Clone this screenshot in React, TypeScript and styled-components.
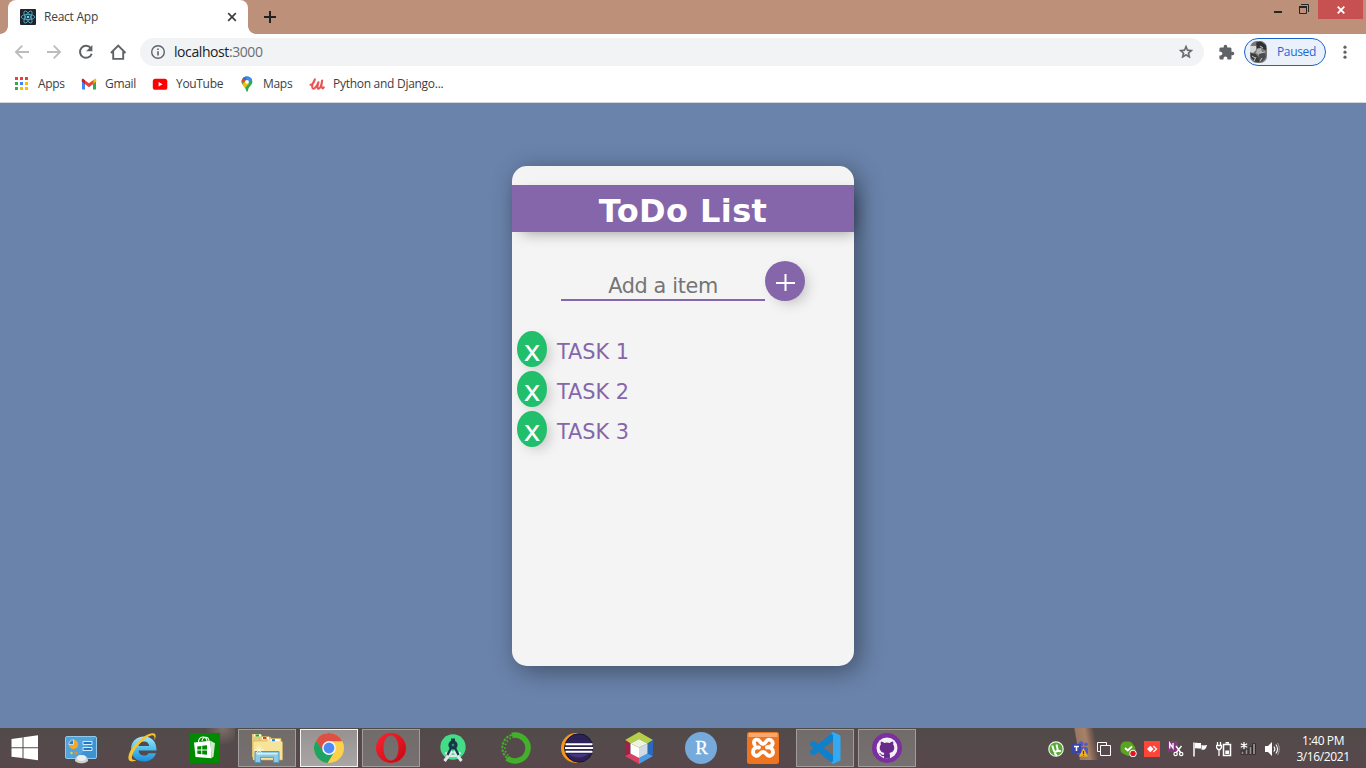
import React from 'react';
import styled, { createGlobalStyle } from 'styled-components';

const Global = createGlobalStyle`
  * { box-sizing: border-box; }
  html, body { margin: 0; padding: 0; overflow: hidden; }
  svg { display: block; flex: none; }
`;

const Screen = styled.div`
  width: 1366px;
  height: 768px;
  display: flex;
  flex-direction: column;
  background: #6a83ab;
  font-family: 'Open Sans', 'Noto Sans', sans-serif;
  font-size: 12px;
  color: #3c4043;
`;

const UiText = styled.span<{ $spacing?: number; $color?: string; $size?: number }>`
  white-space: nowrap;
  letter-spacing: ${(p) => p.$spacing ?? 0}px;
  color: ${(p) => p.$color ?? '#3c4043'};
  font-size: ${(p) => p.$size ?? 12}px;
  line-height: 16px;
`;

/* ---------- browser chrome ---------- */

const TabStrip = styled.header`
  height: 34px;
  flex: none;
  display: flex;
  align-items: flex-start;
  background: #bd9079;
`;

const TabFoot = styled.div<{ $side: 'left' | 'right' }>`
  width: 8px;
  height: 8px;
  margin-top: 26px;
  background: radial-gradient(
    circle at ${(p) => (p.$side === 'left' ? '0 0' : '8px 0')},
    transparent 7.5px,
    #fff 8.2px
  );
`;

const Tab = styled.div`
  width: 240px;
  height: 34px;
  border-radius: 8px 8px 0 0;
  background: #fff;
  display: flex;
  align-items: center;
  padding: 0 11px 0 12px;
  gap: 8px;
`;

const Grow = styled.div`
  flex: 1;
`;

const NewTab = styled.div`
  padding: 11px 0 0 8px;
`;

const WindowControls = styled.div`
  margin-left: auto;
  display: flex;
  align-items: center;
  height: 19px;
  padding-right: 3px;
`;

const CloseWindow = styled.div`
  width: 45px;
  height: 19px;
  margin-left: 9px;
  background: #c75050;
  display: flex;
  align-items: center;
  justify-content: center;
`;

const Toolbar = styled.div`
  height: 36px;
  flex: none;
  background: #fff;
  display: flex;
  align-items: center;
  padding-left: 14px;
`;

const NavButtons = styled.div`
  display: flex;
  gap: 16px;
  margin-right: 13px;
`;

const AddressBar = styled.div`
  width: 1064px;
  height: 28px;
  border-radius: 14px;
  background: #f1f3f4;
  display: flex;
  align-items: center;
  padding: 0 10px;
`;

const Url = styled.div`
  margin-left: 8px;
  font-size: 14px;
  letter-spacing: -0.42px;
  line-height: 18px;
  padding-bottom: 1px;
  color: #202124;
  white-space: nowrap;
  span { color: #6b6f73; }
`;

const ExtensionSlot = styled.div`
  margin: 0 9px 0 14px;
`;

const ProfileChip = styled.div`
  width: 82px;
  height: 28px;
  margin-right: 17px;
  border: 1px solid #1a62d0;
  border-radius: 14px;
  background: #eaf1fb;
  display: flex;
  align-items: center;
  padding-left: 4px;
  gap: 9px;
`;

const Bookmarks = styled.nav`
  height: 33px;
  flex: none;
  background: #fff;
  border-bottom: 1px solid #d3d6da;
  display: flex;
  align-items: center;
  padding: 0 0 5px 13px;
`;

const Bookmark = styled.div<{ $width: number }>`
  width: ${(p) => p.$width}px;
  display: flex;
  align-items: center;
  gap: 8px;
`;

/* ---------- todo page ---------- */

const Page = styled.main`
  flex: 1;
  display: flex;
  justify-content: center;
  align-items: flex-start;
  padding-top: 63px;
  font-family: 'DejaVu Sans', sans-serif;
`;

const Card = styled.section`
  width: 342px;
  height: 500px;
  border-radius: 15px;
  background: #f4f4f4;
  box-shadow: 5px 5px 25px rgba(0, 0, 0, 0.4);
  padding-top: 19px;
`;

const Title = styled.h1`
  margin: 0;
  height: 47px;
  line-height: 52px;
  background: #8566aa;
  color: #fff;
  text-align: center;
  font-size: 32px;
  font-weight: 700;
  letter-spacing: 0.4px;
  box-shadow: 5px 5px 15px -5px rgba(0, 0, 0, 0.4);
`;

const AddRow = styled.div`
  display: flex;
  justify-content: center;
  margin-top: 29px;
`;

const ItemInput = styled.input`
  width: 204px;
  height: 40px;
  padding: 11px 0 0;
  border: 0;
  border-bottom: 2px solid #8566aa;
  background: transparent;
  text-align: center;
  font-family: inherit;
  font-size: 20.8px;
  letter-spacing: -0.35px;
  outline: none;
  &::placeholder { color: #757575; opacity: 1; }
`;

const AddButton = styled.button`
  width: 40px;
  height: 40px;
  padding: 0;
  border: 0;
  border-radius: 50%;
  background: #8566aa;
  display: flex;
  align-items: center;
  justify-content: center;
  box-shadow: 5px 5px 15px -5px rgba(0, 0, 0, 0.3);
`;

const Tasks = styled.ul`
  list-style: none;
  margin: 30px 0 0;
  padding: 0 0 0 5px;
`;

const Task = styled.li`
  height: 40px;
  display: flex;
  color: #8566aa;
  font-size: 20.8px;
  line-height: 42px;
  gap: 10px;
`;

const Remove = styled.button`
  width: 30px;
  height: 36px;
  padding: 4px 0 0;
  border: 0;
  border-radius: 50%;
  background: #21bf6b;
  color: #fff;
  font-family: inherit;
  font-size: 29px;
  line-height: 32px;
  box-shadow: 5px 5px 15px -5px rgba(0, 0, 0, 0.3);
`;

/* ---------- taskbar ---------- */

const Taskbar = styled.footer`
  height: 40px;
  flex: none;
  display: flex;
  background:
    linear-gradient(80deg, transparent 26%, #9a7962 29%, #a68168 50%, #6e564d 66%, transparent 72%) 1068px 0 / 38px 32px no-repeat,
    radial-gradient(ellipse at 60% 0, #80706a, transparent 70%) 205px 0 / 30px 18px no-repeat,
    linear-gradient(180deg, #504a49 0%, #554a4b 45%, #57474c 100%);
`;

const StartButton = styled.div`
  width: 50px;
  display: flex;
  align-items: center;
  justify-content: center;
`;

const Slot = styled.div`
  width: 62px;
  padding: 1px 2px;
`;

const AppButton = styled.div<{ $state?: 'open' | 'active' }>`
  width: 58px;
  height: 38px;
  display: flex;
  align-items: center;
  justify-content: center;
  border: 1px solid ${(p) => (p.$state === 'active' ? '#f4f3f3' : p.$state === 'open' ? '#a29d9b' : 'transparent')};
  background: ${(p) =>
    p.$state === 'active'
      ? 'linear-gradient(#969291, #aaa6a5)'
      : p.$state === 'open'
        ? 'linear-gradient(#716b69, #777071)'
        : 'transparent'};
`;

const Tray = styled.div`
  margin-left: auto;
  display: flex;
  align-items: center;
  padding-top: 2px;
`;

const TrayIcon = styled.div`
  width: 24px;
  display: flex;
  justify-content: center;
`;

const Clock = styled.div`
  width: 82px;
  padding: 1px 4px 0 0;
  display: flex;
  flex-direction: column;
  align-items: center;
  justify-content: center;
`;

/* ---------- icons ---------- */

const ReactLogo = () => (
  <svg width="16" height="16" viewBox="0 0 16 16">
    <rect width="16" height="16" rx="1" fill="#20232a" />
    <g fill="none" stroke="#52b9d4" strokeWidth=".8">
      <ellipse cx="8" cy="8" rx="6.8" ry="2.6" />
      <ellipse cx="8" cy="8" rx="6.8" ry="2.6" transform="rotate(60 8 8)" />
      <ellipse cx="8" cy="8" rx="6.8" ry="2.6" transform="rotate(120 8 8)" />
    </g>
    <circle cx="8" cy="8" r="1.3" fill="#61dafb" />
  </svg>
);

const Arrow = ({ flip = false }: { flip?: boolean }) => (
  <svg width="16" height="16" viewBox="0 0 16 16">
    <path
      d="M15 8H2M8.3 1.6 1.9 8l6.4 6.4"
      transform={flip ? 'translate(16 0) scale(-1 1)' : undefined}
      fill="none"
      stroke="#babcbe"
      strokeWidth="1.8"
    />
  </svg>
);

const Reload = () => (
  <svg width="16" height="16" viewBox="0 0 16 16">
    <path d="M12.800 4.200A6 6 0 1 0 13.700 9.700" fill="none" stroke="#5f6368" strokeWidth="2" />
    <path d="M14.400 1v6.300H8.100z" fill="#5f6368" />
  </svg>
);

const Home = () => (
  <svg width="17" height="16" viewBox="0 0 17 16">
    <path d="M.9 9 8.200 1.600 15.500 9M3.200 7.400v7.500h10V7.400" fill="none" stroke="#5f6368" strokeWidth="1.900" />
  </svg>
);

const Info = () => (
  <svg width="16" height="16" viewBox="0 0 16 16">
    <circle cx="8" cy="8" r="6.300" fill="none" stroke="#5f6368" strokeWidth="1.400" />
    <path d="M8 7.200v4.200M8 4.400v1.600" stroke="#5f6368" strokeWidth="1.600" />
  </svg>
);

const Star = () => (
  <svg width="16" height="16" viewBox="0 0 24 24">
    <path
      fill="#5f6368"
      d="m22 9.24-7.19-.62L12 2 9.19 8.63 2 9.24l5.46 4.73L5.82 21 12 17.27 18.18 21l-1.63-7.03L22 9.24zM12 15.4l-3.76 2.27 1-4.28-3.32-2.88 4.38-.38L12 6.1l1.71 4.04 4.38.38-3.32 2.88 1 4.28L12 15.4z"
      stroke="#5f6368"
      strokeWidth=".8"
    />
  </svg>
);

const Puzzle = () => (
  <svg width="17" height="17" viewBox="0 0 24 24">
    <path
      fill="#5f6368"
      d="M20.5 11H19V7c0-1.1-.9-2-2-2h-4V3.5a2.5 2.5 0 0 0-5 0V5H4c-1.1 0-1.99.9-1.99 2v3.8H3.5c1.49 0 2.7 1.21 2.7 2.7s-1.21 2.7-2.7 2.7H2V20c0 1.1.9 2 2 2h3.8v-1.5c0-1.49 1.21-2.7 2.7-2.7 1.49 0 2.7 1.21 2.7 2.7V22H17c1.1 0 2-.9 2-2v-4h1.5a2.5 2.5 0 0 0 0-5z"
    />
  </svg>
);

const Avatar = () => (
  <svg width="19" height="22" viewBox="0 0 19 22">
    <rect x="1" y="0" width="17" height="22" rx="7" fill="#77787a" />
    <path d="M1 5h6v4l-3 3-3-1z" fill="#d6d7d7" />
    <path d="M7 1.500 12 .5l5 4v5l-5-3-4 1z" fill="#2f3032" />
    <path d="M8 8l4-1 1 4-3 3-3-2z" fill="#b4b4b4" />
    <path d="M1.500 12l5 1 3 3 1 5.500-5-1-3.500-4z" fill="#3a3b3d" />
    <path d="M10 13l6-2 1 5-4 5-3-1z" fill="#4c4d4e" />
    <path d="M3 15l3 2M11 12l5-1M13 17l-2 3M11 5l3 2M5 20l2-4" stroke="#c8c8c8" strokeWidth="1" />
  </svg>
);

const Kebab = () => (
  <svg width="4" height="16" viewBox="0 0 4 16" fill="#5f6368">
    <circle cx="2" cy="3.200" r="1.600" />
    <circle cx="2" cy="8.200" r="1.600" />
    <circle cx="2" cy="13.200" r="1.600" />
  </svg>
);

const AppsGrid = () => (
  <svg width="17" height="16" viewBox="0 0 17 16">
    {['#ea4335', '#ea4335', '#ea4335', '#34a853', '#4285f4', '#fbbc04', '#34a853', '#fbbc04', '#fbbc04'].map((c, i) => (
      <rect key={i} x={2 + (i % 3) * 5} y={1 + Math.floor(i / 3) * 5} width="3" height="3" fill={c} />
    ))}
  </svg>
);

const Gmail = () => (
  <svg width="16" height="16" viewBox="0 0 16 16">
    <path d="M1 4v9.500h3V7z" fill="#4285f4" />
    <path d="M15 4v9.500h-3V7z" fill="#34a853" />
    <path d="M12 4.300 13.500 3c.8-.5 1.800.1 1.800 1v1.500L12 8z" fill="#fbbc04" />
    <path d="M3.500 4 8 7.300 12.500 4v3.800L8 11.200 3.500 7.800z" fill="#ea4335" />
    <path d="M4 4.300 2.500 3C1.700 2.500.7 3.100.7 4v1.500L4 8z" fill="#c5221f" />
  </svg>
);

const YouTube = () => (
  <svg width="16" height="16" viewBox="0 0 16 16">
    <rect x=".8" y="2.800" width="14.500" height="11" rx="2.600" fill="#f00" />
    <path d="m6.600 6 3.900 2.300-3.900 2.300z" fill="#fff" />
  </svg>
);

const MapsPin = () => (
  <svg width="16" height="16" viewBox="0 0 16 16">
    <defs>
      <clipPath id="pin">
        <path d="M8 .5c3.200 0 5.400 2.400 5.400 5.300 0 3.700-4 4.600-4.600 9.200-.2.900-1.400.9-1.600 0C6.600 10.400 2.600 9.500 2.600 5.800 2.600 2.900 4.800.5 8 .5z" />
      </clipPath>
    </defs>
    <g clipPath="url(#pin)">
      <rect width="16" height="16" fill="#34a853" />
      <path d="M5 0h9v3L9 6z" fill="#4285f4" />
      <path d="M2 9.500 7 4.500 10 7.500 5 13z" fill="#fbbc04" />
      <path d="M0 8 6 5 7 0H0z" fill="#ea4335" />
      <path d="M3 1 8 6 6 0z" fill="#1a73e8" />
    </g>
    <circle cx="8" cy="5.800" r="1.900" fill="#fff" />
  </svg>
);

const Udemy = () => (
  <svg width="16" height="16" viewBox="0 0 16 16">
    <path
      d="M1.500 8.800C3.600 8.600 5.600 5.500 5.900 3.200 4.800 5 3 8.500 3.200 11c.1 1.700 1.400 2 2.500 1.200C7.500 11 8.700 8.500 9.500 6.200 8.700 8.500 8 12.500 9.300 12.800c1.600.2 3-3.500 3.900-8.300-.6 3-.9 7.500.3 7.900.6.1 1-.5 1.300-1.100"
      fill="none"
      stroke="#ec5252"
      strokeWidth="2"
      strokeLinecap="round"
      strokeLinejoin="round"
    />
  </svg>
);

const WindowsLogo = () => (
  <svg width="28" height="26" viewBox="0 0 28 26" fill="#fff">
    <path d="M.500 4 11.500 2.500v9.800H.500zM12.500 2.300 27 .3v12H12.500zM.500 13.300h11v9.800L.500 21.700zM12.500 13.300H27v12l-14.500-2z" />
  </svg>
);

const ControlPanel = () => (
  <svg width="34" height="32" viewBox="0 0 34 32">
    <rect x="1.500" y="4.500" width="31" height="22" rx="1.500" fill="#3d93d2" stroke="#8fc9ee" />
    <path d="M2 5h30L14 26H2z" fill="#68b2e4" opacity=".5" />
    <circle cx="9.500" cy="12.500" r="4.700" fill="#f6a72a" />
    <path d="M9.500 12.500V7.800a4.700 4.700 0 0 0-4.700 4.700z" fill="#2f80c0" stroke="#d4edff" strokeWidth=".8" />
    <path d="M19 9.500h9v3h-9zM19 15.500h9v3h-9z" fill="#2277bd" stroke="#cfeaff" />
    <circle cx="7.500" cy="21" r="1.200" fill="#f5d11e" />
    <circle cx="12" cy="21" r="1.500" fill="#f28d18" />
    <path d="M11 29c0-4 3-6 6.500-6s6.500 2 6.500 6c-3 3-10 3-13 0z" fill="#cfd0d2" />
    <ellipse cx="17.500" cy="26" rx="4.500" ry="3" fill="#eceded" />
  </svg>
);

const InternetExplorer = () => (
  <svg width="32" height="32" viewBox="0 0 32 32">
    <defs>
      <linearGradient id="ie" x1="0" y1="0" x2="0" y2="1">
        <stop offset="0" stopColor="#a5e9ff" />
        <stop offset=".5" stopColor="#4bc0f0" />
        <stop offset="1" stopColor="#1b8edb" />
      </linearGradient>
    </defs>
    <path
      d="M29.500 18.500H11.500c.3 3.200 2.500 5 5.500 5 2.200 0 3.800-.9 4.700-2.300h7.300c-1.700 5.200-6.300 8.300-12 8.300C9.700 29.500 4 24.300 4 17S9.600 4.500 17 4.500c7.700 0 12.800 5.500 12.500 14zM22.300 14c-.3-2.900-2.300-4.600-5.200-4.600S11.900 11.200 11.500 14z"
      fill="url(#ie)"
    />
    <path
      d="M27.500 8.500c2-4.500 1.500-7.500-2-7.200C17 2 3 15 1.500 24.500.6 29.500 5 31 10.500 27.500c-4.200 1.300-6.200.3-5.500-3C6.500 17 16.500 6 24 3.500c3-.8 4 1.200 3.500 5z"
      fill="#f7c52f"
    />
  </svg>
);

const Store = () => (
  <svg width="30" height="30" viewBox="0 0 30 30">
    <rect width="30" height="30" fill="#008a00" />
    <path d="m4 9.500 16.500-1.700 1 17.500L5.500 24z" fill="#fff" />
    <path d="m20.500 7.800 4.500 2.500-1.500 13-2 2z" fill="#cce9cc" />
    <path d="M8.500 9.500c0-7 8-7 8.500-1.500M12 8c1-5 6.500-5 7 0" fill="none" stroke="#fff" strokeWidth="1.100" />
    <path d="m7.300 13.400 4-.5v3.700h-4zM12.200 12.800l4.800-.6v4.400h-4.800zM7.300 17.500h4v3.700l-4-.4zM12.200 17.500H17v4.300l-4.800-.5z" fill="#008a00" />
  </svg>
);

const Explorer = () => (
  <svg width="34" height="32" viewBox="0 0 34 32">
    <path d="M2 5V2h9l1.500 3H21v20H2z" fill="#e8cb72" />
    <path d="M10 7V4.500h9L20.500 7H29v18H10z" fill="#efd680" stroke="#c9a94f" strokeWidth=".6" />
    <path d="M17 9V6.500h14V9l1.500 1v18H3V9z" fill="#f6e49b" stroke="#cfaf5c" strokeWidth=".6" />
    <path d="M4 2.500h7v2H4z" fill="#fff" />
    <path d="M5.500 2.500H9v2H5.500z" fill="#19a537" />
    <path d="M12 5h7v2h-7z" fill="#fff" />
    <path d="M13 5h3.500v2H13z" fill="#d9441e" />
    <path d="M20.500 7.200h9v2h-9z" fill="#fff" />
    <path d="M22 7.200h3v2h-3z" fill="#1686da" />
    <path d="M5 19.500h24v11h-5.500v-5.200h-13v5.200H5z" fill="#8fcbe5" stroke="#5498ba" />
    <path d="M6.500 21h21v1.500h-21z" fill="#d5eef8" />
    <path d="M9 13v10M4 18h10M6 15l6 6M12 15l-6 6" stroke="#fffbe5" strokeWidth=".8" />
  </svg>
);

const Chrome = () => (
  <svg width="30" height="30" viewBox="0 0 30 30">
    <circle cx="15" cy="15" r="15" fill="#fdd14b" />
    <path d="M2 7.500A15 15 0 0 1 28.300 8.300H15L8.500 18.700z" fill="#dd5144" />
    <path d="M2 7.500 9.200 18.300 14 21.500l6.800-3.200L13.500 30A15 15 0 0 1 2 7.500z" fill="#1da462" />
    <circle cx="15" cy="15" r="6.900" fill="#f5f5f5" />
    <circle cx="15" cy="15" r="5.400" fill="#4c8bf5" />
  </svg>
);

const Opera = () => (
  <svg width="30" height="30" viewBox="0 0 30 30">
    <defs>
      <linearGradient id="op" x1="0" y1="0" x2="1" y2="1">
        <stop offset="0" stopColor="#fb2434" />
        <stop offset="1" stopColor="#c8060f" />
      </linearGradient>
    </defs>
    <path fillRule="evenodd" d="M15 0a15 15 0 1 1 0 30 15 15 0 0 1 0-30zm0 2.500c-4.500 0-7.500 5.500-7.500 12.500s3 12.500 7.500 12.500 7.500-5.500 7.500-12.500S19.500 2.500 15 2.500z" fill="url(#op)" />
  </svg>
);

const AndroidStudio = () => (
  <svg width="30" height="30" viewBox="0 0 30 30">
    <circle cx="15" cy="14" r="12.700" fill="#45dc88" />
    <path d="m14 18-7.500 10M16 18l7.500 10" stroke="#dfe6ec" strokeWidth="3" />
    <path d="M7.500 19.500c4 4.800 11 4.800 15 0" stroke="#dfe6ec" strokeWidth="2.400" fill="none" />
    <path d="m13 15-3.500 7M17 15l3.500 7" stroke="#16384a" strokeWidth="2.200" />
    <path d="M15 5.500v4" stroke="#16384a" strokeWidth="4" />
    <circle cx="15" cy="12" r="4.600" fill="#16384a" />
    <circle cx="15" cy="12" r="1.300" fill="#3b8c75" />
  </svg>
);

const Anaconda = () => (
  <svg width="32" height="32" viewBox="0 0 32 32">
    <path d="M13 3.300A13 13 0 1 1 8 26.200" fill="none" stroke="#43b02a" strokeWidth="5.500" />
    <path d="M8 26A13.500 13.500 0 0 1 13 2.800" fill="none" stroke="#43b02a" strokeWidth="2" strokeDasharray="2.500 1.200" />
    <path d="M9 23.500A11 11 0 0 1 13 5.600" fill="none" stroke="#43b02a" strokeWidth="2" strokeDasharray="1.500 2.200" />
  </svg>
);

const Eclipse = () => (
  <svg width="32" height="32" viewBox="0 0 32 32">
    <circle cx="15" cy="16" r="15" fill="#f7941e" />
    <circle cx="17.800" cy="16" r="14.200" fill="#2c2255" stroke="#171331" />
    <path d="M8 22a12 9 0 0 0 19 0z" fill="#453583" />
    <path d="M4.500 12.200h27M4 16h28M4.500 19.800h27" stroke="#fff" strokeWidth="2" />
  </svg>
);

const NetBeans = () => (
  <svg width="30" height="32" viewBox="0 0 30 32">
    <path d="M15 0 1 8l5.500 3.500L15 7l8.500 4.500L29 8z" fill="#b6cf49" />
    <path d="m1 8 5.500 3.500v10L1 24z" fill="#a12047" />
    <path d="m1 24 5.500-2.500L15 26v6z" fill="#dc3f63" />
    <path d="m15 32 14-8-5.500-2.500L15 26z" fill="#4c9ce5" />
    <path d="M29 8v16l-5.500-2.500v-10z" fill="#2c69bd" />
    <path d="m6.500 11.500 8.500 4V26l-8.500-4.500z" fill="#fff" />
    <path d="m23.500 11.500-8.500 4V26l8.500-4.500z" fill="#cfdce4" />
    <path d="m15 7 8.500 4.500-8.500 4-8.500-4z" fill="#eef4dc" />
  </svg>
);

const RStudio = () => (
  <svg width="32" height="32" viewBox="0 0 32 32">
    <circle cx="16" cy="16" r="16" fill="#75aadb" />
    <text x="16.500" y="22" textAnchor="middle" fontFamily="'Liberation Serif', serif" fontSize="19" fill="#fff" stroke="#fff" strokeWidth=".3">
      R
    </text>
  </svg>
);

const Xampp = () => (
  <svg width="32" height="32" viewBox="0 0 32 32">
    <rect width="32" height="32" rx="2.500" fill="#ee7420" />
    <path d="M1.500 1h29v4h-29z" fill="#f5a972" />
    <path
      d="M7.500 12.500C6 9 8 7.500 10 7.700c3.500 0 3 4.300 6 4.300s2.500-4.300 6-4.300c3 0 4.500 3 3.200 5.300-.8 1.500-2.700 2-5.200 2.200M20 15.500c4-.5 6 1.500 6 4.500 0 3.300-4 5-6 2.700-1.300-1.500-2-2.700-4-2.700s-2.700 1.200-4 2.700C10 25 6 23.300 6 20c0-3.500 2.500-5 6-4.500"
      fill="none"
      stroke="#fff"
      strokeWidth="3.800"
      strokeLinecap="round"
      strokeLinejoin="round"
    />
  </svg>
);

const VsCode = () => (
  <svg width="32" height="32" viewBox="0 0 32 32">
    <path d="M24 0v9L4.500 23.500 1 21v-2z" fill="#0f80cc" />
    <path d="M24 32v-9L4.500 8.500 1 11v2z" fill="#0f80cc" />
    <path d="m24 0 7.500 3.500v25L24 32l-2-1.500 2-1.500V3l-2-1.500z" fill="#31a9f3" />
  </svg>
);

const GitHubDesktop = () => (
  <svg width="30" height="30" viewBox="0 0 30 30">
    <circle cx="15" cy="15" r="15" fill="#7b2fa0" />
    <circle cx="15" cy="15" r="10.500" fill="#f5f1f7" />
    <path
      d="M9 8.500c1.300 0 2.500.8 3.300 1.400a12 12 0 0 1 5.400 0c.8-.6 2-1.400 3.300-1.400.5 1.300.3 2.500.1 3.100 2.600 3.500.8 8-3.800 8.400.7.800.7 1.600.7 5.500h-6v-2.500c-3.500.6-3-2.300-5-2.800 1.500-.6 2.500 1.800 3.700 1.700.7 0 1.300-.1 1.400-1-.3-.3 0-.7.400-.9-4.200-.4-6.300-5-3.600-8.400-.2-.7-.4-1.800.1-3.100z"
      fill="#6a2a8c"
    />
  </svg>
);

const UTorrent = () => (
  <svg width="16" height="16" viewBox="0 0 16 16">
    <circle cx="8" cy="8" r="7.200" fill="#55a831" stroke="#eef5eb" strokeWidth="1.200" />
    <path d="M4.300 4.500 5.700 9.200c.6 2 3.800 2 4-.3L8.500 3.500M9.600 8.500c.3 1.600 1.700 2.200 3.200 1M6.500 11.500C7.200 13 8 14 9 14.600" fill="none" stroke="#fff" strokeWidth="2" />
  </svg>
);

const Teams = () => (
  <svg width="16" height="16" viewBox="0 0 16 16">
    <circle cx="9" cy="2.800" r="2.500" fill="#5059c9" />
    <circle cx="14" cy="3.300" r="1.700" fill="#5059c9" />
    <rect x="5" y="6" width="11" height="8" rx="2" fill="#5059c9" />
    <rect y="3" width="9" height="9" fill="#3b45a8" />
    <path d="M2 5.500h5M4.500 5.500V10" stroke="#fff" strokeWidth="1.500" />
    <path d="m11.500 7 4.500 8.500H7z" fill="#f8b313" />
    <path d="M11.500 10v3M11.500 13.800v1" stroke="#5b3c00" strokeWidth="1.200" />
  </svg>
);

const Windows = () => (
  <svg width="16" height="16" viewBox="0 0 16 16" fill="none" stroke="#fff">
    <path d="M4 10.500H1.500v-9h9V4M4.500 4.500h10v10h-10z" />
  </svg>
);

const Skype = () => (
  <svg width="17" height="16" viewBox="0 0 17 16">
    <rect x=".5" y=".5" width="13" height="13" rx="5" fill="#5aa51e" />
    <circle cx="9" cy="8.500" r="6.500" fill="#5aa51e" />
    <path d="m5 7 2.800 2.500L12 5.300" stroke="#fff" strokeWidth="1.900" fill="none" />
    <circle cx="13" cy="12.500" r="3.300" fill="#e81123" stroke="#fff" />
  </svg>
);

const AnyDesk = () => (
  <svg width="16" height="16" viewBox="0 0 16 16">
    <rect width="16" height="16" fill="#ff4438" />
    <path d="m6.300 4.700 3.300 3.300-3.300 3.300L3 8z" fill="#fff" />
    <path d="m9.300 5 3.200 3-3.200 3" fill="none" stroke="#fff" strokeWidth="1.200" />
  </svg>
);

const OneNoteClip = () => (
  <svg width="16" height="16" viewBox="0 0 16 16">
    <rect width="10" height="11" fill="#80397b" />
    <path d="M1.700 7.500V2.200l3.300 5V2" stroke="#fff" strokeWidth="1.300" fill="none" />
    <path d="m8 5 5 7M13.500 5 8 12" stroke="#fff" strokeWidth="1.400" />
    <circle cx="7.600" cy="13" r="1.700" fill="none" stroke="#fff" strokeWidth="1.200" />
    <circle cx="13.200" cy="13" r="1.700" fill="none" stroke="#fff" strokeWidth="1.200" />
  </svg>
);

const Flag = () => (
  <svg width="16" height="16" viewBox="0 0 16 16">
    <path d="M2 1.500v14" stroke="#fff" strokeWidth="1.500" />
    <path d="M3 2c2-1 4 .5 6 0v5.500c-2 .5-4-1-6 0zM9.500 4c2 .7 3.500.4 5.500 0-.7 3-1.700 5.500-5.500 4.700z" fill="#fff" />
  </svg>
);

const Battery = () => (
  <svg width="16" height="16" viewBox="0 0 16 16" fill="none" stroke="#fff">
    <path d="M1.500 1v3M4.500 1v3M.5 4.500h5v2l-1.500 2H2L.5 6.500zM3 8.500V15" strokeWidth="1.300" />
    <path d="M7.500 3.500h7v11h-7zM9.500 1.800H13" strokeWidth="1.500" />
    <path d="M9.300 9.500h3.700V13H9.300z" fill="#fff" stroke="none" />
  </svg>
);

const Signal = () => (
  <svg width="16" height="16" viewBox="0 0 16 16">
    <path d="M2.500 9.500v4M6.500 8v5.500M10.500 5.500v8M14 2.500v11" stroke="#262323" strokeWidth="3.400" />
    <path d="M2.500 10.500v2.500M6.500 8.500V13M10.500 6V13M14 3V13" stroke="#989393" strokeWidth="1.800" />
    <path d="M4 1v7M.8 2.800l6.400 3.500M7.200 2.800.8 6.300" stroke="#fff" strokeWidth="1.200" />
  </svg>
);

const Speaker = () => (
  <svg width="16" height="16" viewBox="0 0 16 16">
    <path d="M1 5h3l4-4v14l-4-4H1z" fill="#fff" />
    <path d="M9.800 5.500c1.300 1.500 1.300 3.500 0 5M11.800 3.500c2.300 2.500 2.300 6.500 0 9" stroke="#fff" fill="none" strokeWidth="1.100" />
    <path d="M13.500 2c2.300 3.500 2.300 8.500 0 12" stroke="#aaa3a3" fill="none" />
  </svg>
);

type TaskApp = { icon: React.ReactNode; state?: 'open' | 'active' };

const apps: TaskApp[] = [
  { icon: <ControlPanel /> },
  { icon: <InternetExplorer /> },
  { icon: <Store /> },
  { icon: <Explorer />, state: 'open' },
  { icon: <Chrome />, state: 'active' },
  { icon: <Opera />, state: 'open' },
  { icon: <AndroidStudio /> },
  { icon: <Anaconda /> },
  { icon: <Eclipse /> },
  { icon: <NetBeans /> },
  { icon: <RStudio /> },
  { icon: <Xampp /> },
  { icon: <VsCode />, state: 'open' },
  { icon: <GitHubDesktop />, state: 'open' },
];

const trayIcons = [UTorrent, Teams, Windows, Skype, AnyDesk, OneNoteClip, Flag, Battery, Signal, Speaker];

export default function App() {
  return (
    <Screen>
      <Global />
      <TabStrip>
        <TabFoot $side="left" />
        <Tab>
          <ReactLogo />
          <UiText $spacing={-0.25}>React App</UiText>
          <Grow />
          <svg width="10" height="10" viewBox="0 0 10 10">
            <path d="m1.200 1.200 7.600 7.600M8.800 1.200 1.200 8.800" stroke="#3c4043" strokeWidth="1.700" />
          </svg>
        </Tab>
        <TabFoot $side="right" />
        <NewTab>
          <svg width="12" height="12" viewBox="0 0 12 12">
            <path d="M6 0v12M0 6h12" stroke="#202124" strokeWidth="2" />
          </svg>
        </NewTab>
        <WindowControls>
          <svg width="36" height="19" viewBox="0 0 36 19">
            <path d="M1 12h8" stroke="#262626" strokeWidth="2" />
            <path d="M26.500 6.500h7v7h-7zM28 4.500h7.500V12" fill="none" stroke="#262626" />
            <path d="M26 7h8" stroke="#262626" strokeWidth="2" />
          </svg>
          <CloseWindow>
            <svg width="8" height="8" viewBox="0 0 8 8">
              <path d="m.7.700 6.600 6.600M7.300.700.7 7.300" stroke="#fff" strokeWidth="1.800" />
            </svg>
          </CloseWindow>
        </WindowControls>
      </TabStrip>
      <Toolbar>
        <NavButtons>
          <Arrow />
          <Arrow flip />
          <Reload />
          <Home />
        </NavButtons>
        <AddressBar>
          <Info />
          <Url>
            localhost<span>:3000</span>
          </Url>
          <Grow />
          <Star />
        </AddressBar>
        <ExtensionSlot>
          <Puzzle />
        </ExtensionSlot>
        <ProfileChip>
          <Avatar />
          <UiText $color="#1f66d2" $spacing={-0.35}>Paused</UiText>
        </ProfileChip>
        <Kebab />
      </Toolbar>
      <Bookmarks>
        <Bookmark $width={68}>
          <AppsGrid />
          <UiText $spacing={-0.3}>Apps</UiText>
        </Bookmark>
        <Bookmark $width={71}>
          <Gmail />
          <UiText $spacing={-0.3}>Gmail</UiText>
        </Bookmark>
        <Bookmark $width={87}>
          <YouTube />
          <UiText $spacing={-0.32}>YouTube</UiText>
        </Bookmark>
        <Bookmark $width={70}>
          <MapsPin />
          <UiText $spacing={-0.3}>Maps</UiText>
        </Bookmark>
        <Bookmark $width={150}>
          <Udemy />
          <UiText $spacing={-0.28}>Python and Django...</UiText>
        </Bookmark>
      </Bookmarks>
      <Page>
        <Card>
          <Title>ToDo List</Title>
          <AddRow>
            <ItemInput placeholder="Add a item" />
            <AddButton aria-label="Add">
              <svg width="20" height="20" viewBox="0 0 20 20">
                <path d="M10.500 3v18M1 12h19" stroke="#fff" strokeWidth="2" />
              </svg>
            </AddButton>
          </AddRow>
          <Tasks>
            {['TASK 1', 'TASK 2', 'TASK 3'].map((t) => (
              <Task key={t}>
                <Remove>x</Remove>
                {t}
              </Task>
            ))}
          </Tasks>
        </Card>
      </Page>
      <Taskbar>
        <StartButton>
          <WindowsLogo />
        </StartButton>
        {apps.map((app, i) => (
          <Slot key={i}>
            <AppButton $state={app.state}>{app.icon}</AppButton>
          </Slot>
        ))}
        <Tray>
          {trayIcons.map((Icon, i) => (
            <TrayIcon key={i}>
              <Icon />
            </TrayIcon>
          ))}
        </Tray>
        <Clock>
          <UiText $color="#fff" $spacing={-0.4}>1:40 PM</UiText>
          <UiText $color="#fff" $spacing={-0.4}>3/16/2021</UiText>
        </Clock>
      </Taskbar>
    </Screen>
  );
}
